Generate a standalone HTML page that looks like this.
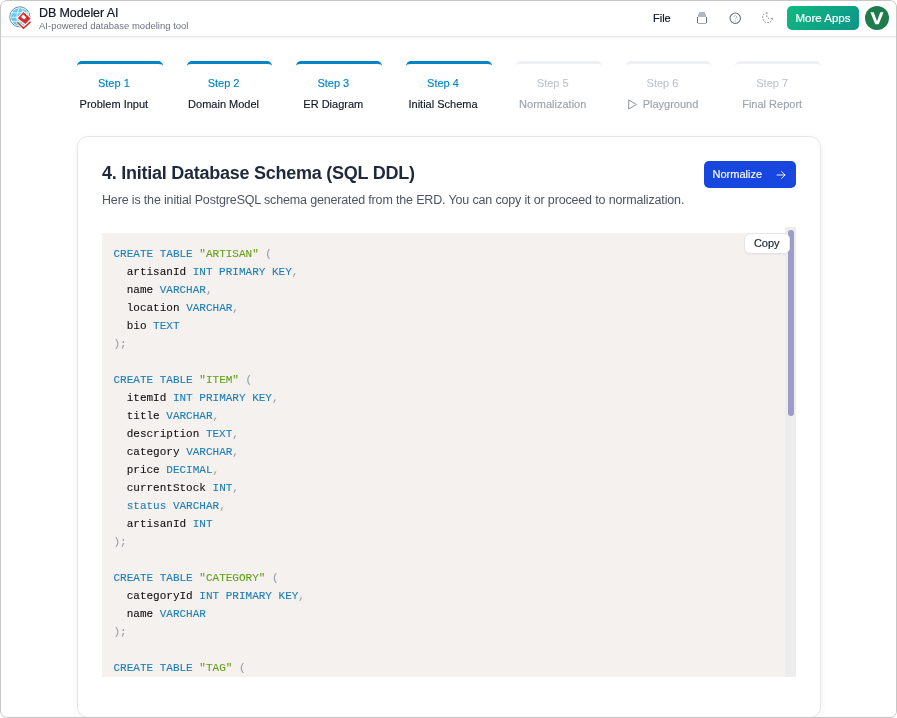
<!DOCTYPE html>
<html><head><meta charset="utf-8">
<style>
*{box-sizing:border-box;margin:0;padding:0}
html,body{width:897px;height:718px;overflow:hidden;background:#fff;font-family:"Liberation Sans",sans-serif}
.frame{position:absolute;left:0;top:0;width:897px;height:718px;overflow:hidden;background:#fff;will-change:transform}
.bd{position:absolute;left:0;top:0;width:897px;height:718px;border:1px solid #c6c6c6;border-radius:7px;box-shadow:0 0 0 6px #fff;z-index:50;pointer-events:none}
.hdr{position:absolute;left:0;top:0;width:897px;height:37px;border-bottom:1px solid #e5e7eb;box-shadow:0 1px 2px rgba(0,0,0,0.05);background:#fff;z-index:2}
.logo{position:absolute;left:6px;top:4px;width:28px;height:28px}
.ttl{position:absolute;left:39px;top:6px;font-size:12.5px;color:#111827;-webkit-text-stroke:0.2px #111827;white-space:nowrap;letter-spacing:-0.1px}
.sub{position:absolute;left:39px;top:19.5px;font-size:9.5px;color:#6b7280;white-space:nowrap}
.file{position:absolute;left:653px;top:12px;font-size:11px;color:#111827;-webkit-text-stroke:0.2px #111827}
.ico{position:absolute;top:11px;overflow:visible}
.more{position:absolute;left:787px;top:6px;width:72px;height:24px;border-radius:5px;background:linear-gradient(135deg,#10b981,#0d9488);color:#fff;font-size:11.5px;line-height:24px;text-align:center;-webkit-text-stroke:0.2px #fff}
.av{position:absolute;left:865px;top:6px;overflow:hidden;width:24px;height:24px;border-radius:50%;background:#1e7b4b;color:#fff;font-weight:700;font-size:16px;line-height:24px;text-align:center}
.steps{position:absolute;left:77px;top:61px;width:744px;display:flex;gap:24px}
.step{flex:1;height:60px;border-top:3px solid #eff0f3;border-radius:5px 5px 0 0;text-align:center;padding-right:12px}
.step.on{border-top-color:#0284c7}
.step .n{font-size:11px;margin-top:13px;color:#c1c5cc;-webkit-text-stroke:0.15px currentColor}
.step.on .n{color:#0284c7}
.step .l{font-size:11px;margin-top:9px;color:#9ca3af;-webkit-text-stroke:0.15px currentColor}
.step.on .l{color:#111827}
.card{position:absolute;left:77px;top:136px;width:744px;height:582px;border:1px solid #e5e7eb;border-radius:11px;background:#fff;box-shadow:0 2px 8px rgba(0,0,0,0.05)}
.h2{position:absolute;left:24px;top:26px;font-size:18px;font-weight:700;color:#1e293b;letter-spacing:-0.25px;white-space:nowrap}
.desc{position:absolute;left:24px;top:56px;font-size:12.5px;color:#4b5563;letter-spacing:-0.16px;white-space:nowrap}
.norm{position:absolute;left:626px;top:24px;width:92px;height:27px;border-radius:5px;background:#1847e0;color:#fff;font-size:11px;line-height:27px;padding-left:8.5px;-webkit-text-stroke:0.15px #fff}
.code{position:absolute;left:24px;top:96px;width:683px;height:444px;background:#f4f1ee;overflow:hidden}
.track{position:absolute;left:707px;top:90px;width:11px;height:450px;background:#ededed}
.thumb{position:absolute;left:710px;top:93px;width:6px;height:186px;border-radius:4px;background:#9c9cc4}
.copy{position:absolute;left:666px;top:96px;width:45.5px;height:20.5px;border:1px solid #e3e5e9;border-radius:6px;background:#fff;font-size:11px;line-height:18.5px;text-align:center;color:#1e2533;-webkit-text-stroke:0.2px #1e2533;box-shadow:0 1px 1px rgba(0,0,0,0.04)}
pre{font-family:"Liberation Mono",monospace;font-size:11px;line-height:18px;color:#111;padding:11.5px 11.5px;-webkit-text-stroke:0.1px currentColor;white-space:pre}
.k{color:#1d7db5}.s{color:#66a01c}.p{color:#9a9ea3}
</style></head><body>
<div class="frame">
 <div class="hdr">
  <svg class="logo" width="28" height="28" viewBox="0 0 28 28">
  <circle cx="13.85" cy="12.9" r="10.1" fill="#fff" stroke="#4f8797" stroke-width="0.9"/>
  <circle cx="13.85" cy="12.9" r="8.9" fill="#66c6f1"/>
  <g stroke="#eaf7fd" stroke-width="0.9" fill="none">
   <path d="M5 8.8 H23 M4.8 13.2 H23 M5.3 17.4 H23"/>
   <path d="M13.2 4 Q8.5 12.9 13.2 21.8"/>
   <path d="M15.5 4 Q19.5 12.9 15.5 21.8"/>
  </g>
  <path d="M17.4 6.6 L26 14.4 L19.4 21.4 L10.4 14.3 Z" fill="#fff"/>
  <path d="M17.4 7.9 L24.6 14.4 L19.4 20.1 L11.7 14.3 Z" fill="#d42f2f"/>
  <path d="M17.1 10.6 L20.2 13.2 L18.2 15.6 L15.1 13 Z" fill="#fff"/>
  <path d="M11 18 L17.5 24.3 L24.8 17.6" fill="none" stroke="#fff" stroke-width="2.8"/>
  <path d="M11.3 18.3 L17.5 24.3 L24.5 17.9" fill="none" stroke="#d42f2f" stroke-width="1.5"/>
 </svg>
  <div class="ttl">DB Modeler AI</div>
  <div class="sub">AI-powered database modeling tool</div>
  <div class="file">File</div>
  <svg class="ico" style="left:695px;top:10px" width="14" height="16" viewBox="0 0 14 16" shape-rendering="crispEdges">
   <path d="M4 2 H10 V4 H11 V7 H3 V4 H4 Z" fill="#b3b8c0"/>
   <path d="M2 7 H3 V13 H2 Z M11 7 H12 V13 H11 Z" fill="#656c79"/>
   <path d="M3 13 H11 V14 H3 Z" fill="#a3a9b2"/>
  </svg>
  <svg class="ico" style="left:728.7px;top:11.7px" width="12.5" height="12.5" viewBox="0 0 24 24">
   <circle cx="12" cy="12" r="10" fill="none" stroke="#656c78" stroke-width="2"/>
   <path d="M9.09 9a3 3 0 0 1 5.83 1c0 2-3 3-3 3" fill="none" stroke="#a0a5ae" stroke-width="1.6" stroke-linecap="round"/>
   <path d="M11 17.5h2" stroke="#7b818c" stroke-width="1.6"/>
  </svg>
  <svg class="ico" style="left:761.3px;top:11.3px" width="13.3" height="13.3" viewBox="0 0 24 24">
   <path d="M12 3a6 6 0 0 0 9 9 9 9 0 1 1-9-9Z" fill="none" stroke="#6b7280" stroke-width="1.7" stroke-dasharray="2.6 2.6" stroke-dashoffset="0" stroke-linejoin="round"/>
  </svg>
  <div class="more">More Apps</div>
  <div class="av"><svg width="24" height="24" viewBox="865 6 24 24" style="position:absolute;left:0;top:0"><path d="M870.4 12.2 L873.7 12.2 L877 21.3 L880.3 12.2 L883.6 12.2 L878.7 24.2 L875.3 24.2 Z" fill="#fff"/></svg></div>
 </div>
 <div class="steps">
  <div class="step on"><div class="n">Step 1</div><div class="l">Problem Input</div></div>
  <div class="step on"><div class="n">Step 2</div><div class="l">Domain Model</div></div>
  <div class="step on"><div class="n">Step 3</div><div class="l">ER Diagram</div></div>
  <div class="step on"><div class="n">Step 4</div><div class="l">Initial Schema</div></div>
  <div class="step"><div class="n">Step 5</div><div class="l">Normalization</div></div>
  <div class="step"><div class="n">Step 6</div><div class="l"><svg width="10" height="11" viewBox="0 0 10 11" style="vertical-align:-2px;margin-right:6px"><path d="M1.7 1 L9.5 5.5 L1.7 10 Z" fill="none" stroke="#8f96a0" stroke-width="1" stroke-linejoin="round"/></svg>Playground</div></div>
  <div class="step"><div class="n">Step 7</div><div class="l">Final Report</div></div>
 </div>
 <div class="card">
  <div class="h2">4. Initial Database Schema (SQL DDL)</div>
  <div class="desc">Here is the initial PostgreSQL schema generated from the ERD. You can copy it or proceed to normalization.</div>
  <div class="norm">Normalize<svg style="position:absolute;left:72px;top:9px" width="10" height="10" viewBox="0 0 10 10"><path d="M1 5 H9 M5.5 1.5 L9 5 L5.5 8.5" fill="none" stroke="#e8edff" stroke-width="1" stroke-linecap="round" stroke-linejoin="round"/></svg></div>
  <div class="track"></div><div class="thumb"></div>
  <div class="code"><pre><span class="k">CREATE TABLE</span> <span class="s">"ARTISAN"</span> <span class="p">(</span>
  artisanId <span class="k">INT PRIMARY KEY</span><span class="p">,</span>
  name <span class="k">VARCHAR</span><span class="p">,</span>
  location <span class="k">VARCHAR</span><span class="p">,</span>
  bio <span class="k">TEXT</span>
<span class="p">);</span>

<span class="k">CREATE TABLE</span> <span class="s">"ITEM"</span> <span class="p">(</span>
  itemId <span class="k">INT PRIMARY KEY</span><span class="p">,</span>
  title <span class="k">VARCHAR</span><span class="p">,</span>
  description <span class="k">TEXT</span><span class="p">,</span>
  category <span class="k">VARCHAR</span><span class="p">,</span>
  price <span class="k">DECIMAL</span><span class="p">,</span>
  currentStock <span class="k">INT</span><span class="p">,</span>
  <span class="k">status</span> <span class="k">VARCHAR</span><span class="p">,</span>
  artisanId <span class="k">INT</span>
<span class="p">);</span>

<span class="k">CREATE TABLE</span> <span class="s">"CATEGORY"</span> <span class="p">(</span>
  categoryId <span class="k">INT PRIMARY KEY</span><span class="p">,</span>
  name <span class="k">VARCHAR</span>
<span class="p">);</span>

<span class="k">CREATE TABLE</span> <span class="s">"TAG"</span> <span class="p">(</span>
</pre></div>
  <div class="copy">Copy</div>
 </div>
</div>
<div class="bd"></div>
</body></html>
